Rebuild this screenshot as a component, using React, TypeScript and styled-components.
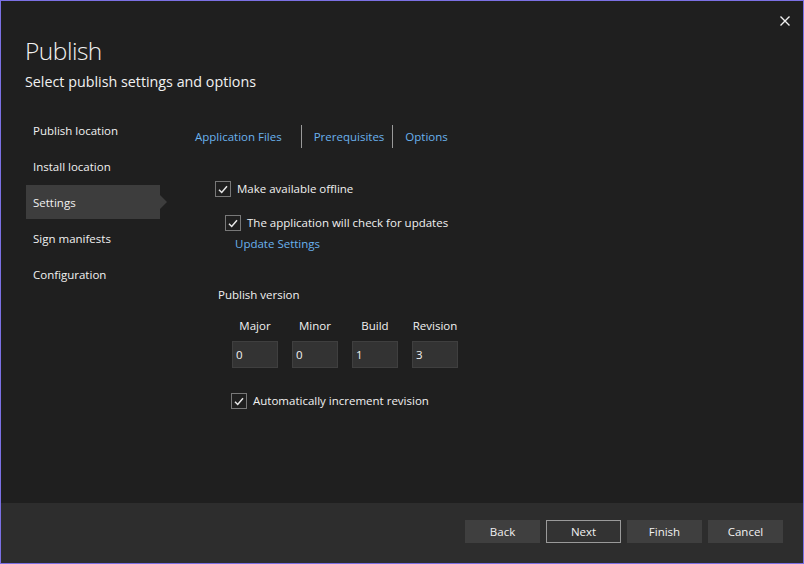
import React from "react";
import styled, { createGlobalStyle } from "styled-components";

const Global = createGlobalStyle`
  html, body { margin: 0; padding: 0; background: #1f1f1f; }
  body { font-family: "Open Sans", "Noto Sans", sans-serif; color: #f1f1f1; }
  * { box-sizing: border-box; }
`;

const Window = styled.div`
  width: 804px;
  height: 564px;
  border: 1px solid #7b70e4;
  display: flex;
  flex-direction: column;
  background: #1f1f1f;
`;

const Body = styled.div`
  flex: 1;
  display: flex;
  flex-direction: column;
`;

const Header = styled.div`
  display: flex;
  align-items: flex-start;
  justify-content: space-between;
  padding: 0 13px 0 24px;
  height: 111px;
`;

const TitleBlock = styled.div`
  padding-top: 33px;
`;

const Title = styled.h1`
  margin: 0;
  font-size: 24.5px;
  line-height: 34px;
  font-weight: 300;
  letter-spacing: -0.5px;
  color: #f1f1f1;
`;

const Subtitle = styled.div`
  margin-top: 4px;
  font-size: 14.3px;
  line-height: 20px;
  color: #f1f1f1;
`;

const CloseButton = styled.button`
  margin-top: 14px;
  width: 11px;
  height: 11px;
  padding: 0;
  border: none;
  background: transparent;
  display: flex;
  align-items: center;
  justify-content: center;
  cursor: pointer;
`;

const Content = styled.div`
  display: flex;
`;

const Sidebar = styled.nav`
  width: 134px;
  margin-left: 25px;
  padding-top: 1px;
  display: flex;
  flex-direction: column;
  gap: 2px;
`;

const NavItem = styled.div<{ $active?: boolean }>`
  position: relative;
  height: 34px;
  display: flex;
  align-items: center;
  padding-left: 7px;
  font-size: 11.5px;
  color: #f1f1f1;
  background: ${(p) => (p.$active ? "#3d3d3d" : "transparent")};
  &::after {
    content: "";
    display: ${(p) => (p.$active ? "block" : "none")};
    position: absolute;
    right: -7px;
    top: 10px;
    border-top: 7px solid transparent;
    border-bottom: 7px solid transparent;
    border-left: 7px solid #3d3d3d;
  }
`;

const Panel = styled.div`
  margin-left: 35px;
  display: flex;
  flex-direction: column;
  padding-top: 13px;
`;

const Tabs = styled.div`
  display: flex;
  align-items: stretch;
  height: 23px;
`;

const Tab = styled.a<{ $pad: number }>`
  display: flex;
  align-items: center;
  font-size: 11.5px;
  color: #6ab2ee;
  padding-right: ${(p) => p.$pad}px;
  text-decoration: none;
`;

const TabSep = styled.span`
  width: 1px;
  background: #9a9a9a;
  margin-right: 12px;
`;

const Row = styled.div<{ $top: number; $indent: number }>`
  display: flex;
  align-items: center;
  margin-top: ${(p) => p.$top}px;
  margin-left: ${(p) => p.$indent}px;
  height: 16px;
  font-size: 11.5px;
  line-height: 16px;
  color: #f1f1f1;
`;

const Box = styled.span`
  width: 16px;
  height: 16px;
  border: 1px solid #787878;
  display: flex;
  align-items: center;
  justify-content: center;
  margin-right: 6px;
  flex-shrink: 0;
`;

const Link = styled.a`
  color: #6ab2ee;
  text-decoration: none;
  cursor: pointer;
`;

const VersionGrid = styled.div`
  margin-top: 15px;
  margin-left: 37px;
  display: grid;
  grid-template-columns: repeat(4, 46px);
  column-gap: 14px;
  row-gap: 7px;
`;

const VersionLabel = styled.div`
  font-size: 11.5px;
  line-height: 16px;
  text-align: center;
  white-space: nowrap;
  color: #f1f1f1;
`;

const VersionInput = styled.div`
  height: 27px;
  background: #333333;
  border: 1px solid #3f3f3f;
  font-size: 11.5px;
  display: flex;
  align-items: center;
  padding-left: 3px;
  color: #f1f1f1;
`;

const Footer = styled.div`
  height: 60px;
  background: #2d2d2d;
  display: flex;
  justify-content: flex-end;
  align-items: flex-start;
  padding: 17px 20px 0 0;
  gap: 6px;
`;

const Button = styled.button<{ $primary?: boolean }>`
  width: 75px;
  height: 23px;
  font-family: inherit;
  font-size: 11.5px;
  color: #f1f1f1;
  background: ${(p) => (p.$primary ? "#333333" : "#3f3f3f")};
  border: 1px solid ${(p) => (p.$primary ? "#9a9a9a" : "#3f3f3f")};
  padding: 0;
  cursor: pointer;
`;

const Check = () => (
  <Box>
    <svg width="10" height="9" viewBox="0 0 10 9">
      <path d="M1 4.8 L3.7 7.5 L9 1.2" fill="none" stroke="#e8e8e8" strokeWidth="1.5" />
    </svg>
  </Box>
);

const navItems = ["Publish location", "Install location", "Settings", "Sign manifests", "Configuration"];
const versions = [
  ["Major", "0"],
  ["Minor", "0"],
  ["Build", "1"],
  ["Revision", "3"],
];

export default function App() {
  return (
    <>
      <Global />
      <Window>
        <Body>
          <Header>
            <TitleBlock>
              <Title>Publish</Title>
              <Subtitle>Select publish settings and options</Subtitle>
            </TitleBlock>
            <CloseButton aria-label="Close">
              <svg width="10" height="10" viewBox="0 0 10 10">
                <path d="M0.5 0.5 L9.5 9.5 M9.5 0.5 L0.5 9.5" stroke="#f1f1f1" strokeWidth="1.4" />
              </svg>
            </CloseButton>
          </Header>
          <Content>
            <Sidebar>
              {navItems.map((n) => (
                <NavItem key={n} $active={n === "Settings"}>
                  {n}
                </NavItem>
              ))}
            </Sidebar>
            <Panel>
              <Tabs>
                <Tab $pad={19}>Application Files</Tab>
                <TabSep />
                <Tab $pad={8}>Prerequisites</Tab>
                <TabSep />
                <Tab $pad={0}>Options</Tab>
              </Tabs>
              <Row $top={33} $indent={20}>
                <Check />
                Make available offline
              </Row>
              <Row $top={18} $indent={30}>
                <Check />
                The application will check for updates
              </Row>
              <Row $top={5} $indent={40}>
                <Link>Update Settings</Link>
              </Row>
              <Row $top={35} $indent={23}>
                Publish version
              </Row>
              <VersionGrid>
                {versions.map(([l]) => (
                  <VersionLabel key={l}>{l}</VersionLabel>
                ))}
                {versions.map(([l, v]) => (
                  <VersionInput key={l + "i"}>{v}</VersionInput>
                ))}
              </VersionGrid>
              <Row $top={25} $indent={36}>
                <Check />
                Automatically increment revision
              </Row>
            </Panel>
          </Content>
        </Body>
        <Footer>
          <Button>Back</Button>
          <Button $primary>Next</Button>
          <Button>Finish</Button>
          <Button>Cancel</Button>
        </Footer>
      </Window>
    </>
  );
}
